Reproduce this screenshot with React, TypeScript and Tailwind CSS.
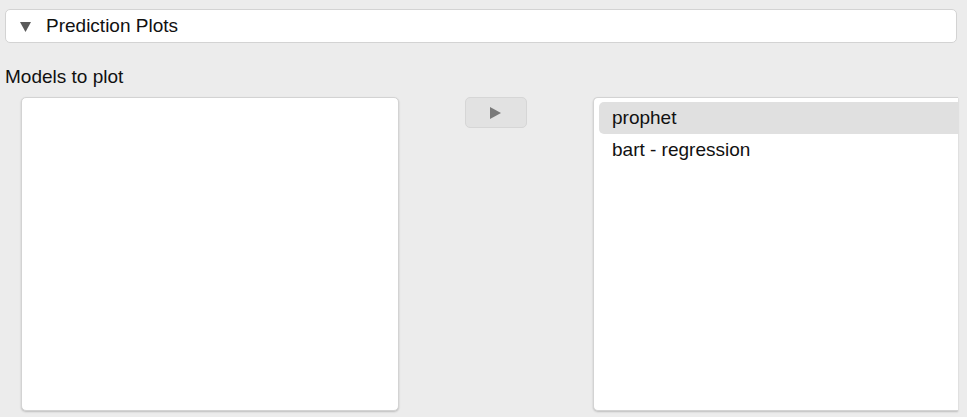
import React from "react";

export default function App() {
  return (
    <div
      className="w-[967px] h-[417px] bg-[#ececec] overflow-hidden text-[19px] text-[#111]"
      style={{ fontFamily: '"Liberation Sans", Arial, sans-serif' }}
    >
      <div className="pt-[9px] pl-[5px]">
        <div className="w-[952px] h-[34px] bg-white border border-[#d3d3d3] rounded-[5px] flex items-center pl-[14px]">
          <svg width="11" height="11" viewBox="0 0 11 11" className="mr-[15px]">
            <polygon points="0,1 11,1 5.5,11" fill="#5a5a5a" />
          </svg>
          <span className="leading-[22px]">Prediction Plots</span>
        </div>
      </div>
      <div className="ml-[5px] mt-[23px] leading-[22px]">Models to plot</div>
      <div className="flex items-start pl-[21px] mt-[9px]">
        <div className="w-[378px] h-[314px] bg-white border border-[#d3d3d3] rounded-[5px] shadow-[0_1px_2px_rgba(0,0,0,0.2)]" />
        <div className="ml-[66px] w-[62px] h-[31px] bg-[#e2e2e2] border border-[#d6d6d6] rounded-[5px] flex items-center justify-center">
          <svg width="11" height="12" viewBox="0 0 11 12" className="ml-[-2px]">
            <polygon points="0,0 11,6 0,12" fill="#7a7a7a" />
          </svg>
        </div>
        <div className="ml-[66px] w-[365px] h-[314px] bg-white border border-r-0 border-[#d3d3d3] rounded-l-[5px] shadow-[0_1px_2px_rgba(0,0,0,0.2)] pt-[4px] pl-[5px]">
          <div className="h-[32px] bg-[#e0e0e0] rounded-l-[5px] flex items-center pl-[13px] leading-[22px]">
            prophet
          </div>
          <div className="h-[32px] flex items-center pl-[13px] leading-[22px]">
            bart - regression
          </div>
        </div>
      </div>
    </div>
  );
}
